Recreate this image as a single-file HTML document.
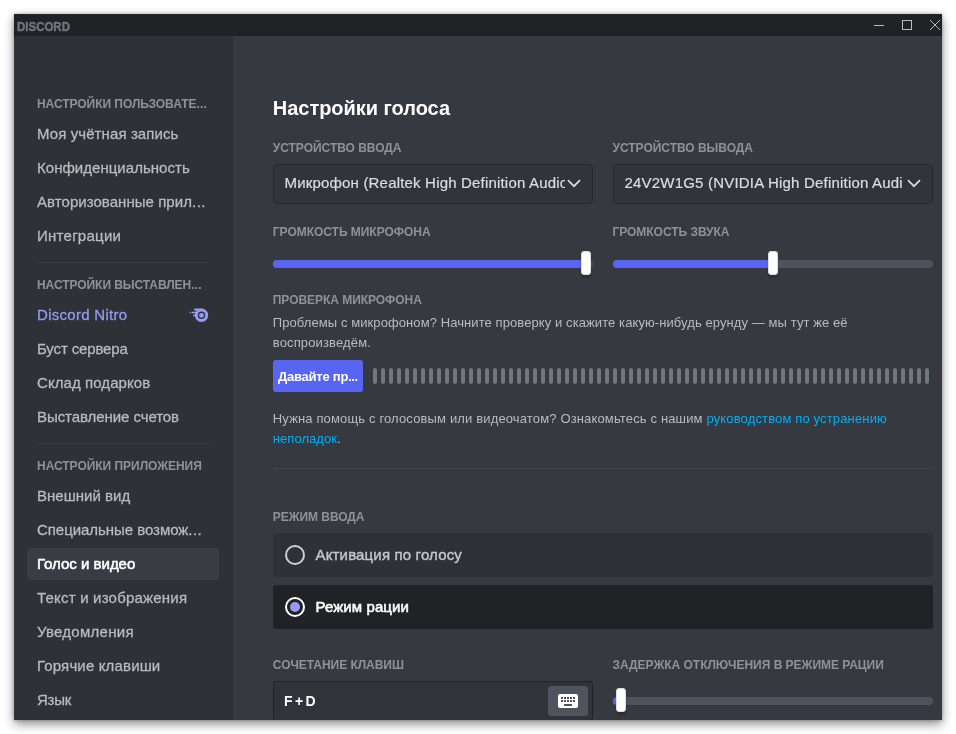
<!DOCTYPE html>
<html lang="ru">
<head>
<meta charset="utf-8">
<title>Discord — Настройки голоса</title>
<style>
*{box-sizing:border-box;margin:0;padding:0}
html,body{width:956px;height:734px;overflow:hidden;background:#fff}
body{font-family:"Liberation Sans",sans-serif;position:relative}
.a{position:absolute}
#win{left:14px;top:14px;width:928px;height:706px;background:#36393f;box-shadow:0 4px 10px rgba(0,0,0,.45),0 0 3px rgba(0,0,0,.25)}
#bar{left:14px;top:14px;width:928px;height:22px;background:#202225}
#side{left:14px;top:36px;width:219px;height:684px;background:#2f3136}
#s1,#s2{-webkit-text-stroke:.2px #dcddde}
.t{position:absolute;white-space:nowrap;line-height:20px;height:20px}
.t i.e{font-style:normal}
.sep{left:37px;width:172px;height:1px;background:#3a3c42}
#sel{left:27px;top:548px;width:192px;height:32px;border-radius:4px;background:#393c43}
.select{height:40px;width:320px;top:164px;background:#31343a;border:1px solid #27292e;border-radius:4px}
.track{height:8px;border-radius:4px;background:#4f545c}
.fill{height:8px;border-radius:4px;background:#5865f2}
.thumb{width:10px;height:24px;border-radius:3px;background:#fff;border:1px solid #dcddde;box-shadow:0 3px 1px 0 rgba(0,0,0,.05),0 2px 2px 0 rgba(0,0,0,.1),0 3px 3px 0 rgba(0,0,0,.05)}
#btn{left:273px;top:360px;width:90px;height:32px;border-radius:3px;background:#5865f2}
.bar{position:absolute;top:368px;width:4px;height:16px;border-radius:2px;background:#72767d}
#div{left:273px;top:468px;width:660px;height:1px;background:#42454a}
.radio{left:273px;width:660px;height:44px;border-radius:3px}
#kb{left:273px;top:681px;width:320px;height:40px;background:#303338;border:1px solid #202225;border-radius:3px}
#kbbtn{left:548px;top:686px;width:40px;height:30px;border-radius:3px;background:#4f545c}
#clipbottom{left:0;top:720px;width:956px;height:14px}
</style>
</head>
<body>
<div class="a" id="win"></div>
<div class="a" id="bar"></div>
<div class="a" id="side"></div>

<!-- title bar -->
<svg class="a" style="left:868px;top:14px" width="74" height="22" viewBox="0 0 74 22">
  <path d="M6 11.5H16" stroke="#b9bbbe" stroke-width="1" fill="none"/>
  <rect x="34.5" y="6.5" width="9" height="9" stroke="#b9bbbe" stroke-width="1" fill="none"/>
  <path d="M62 6L72 16M72 6L62 16" stroke="#b9bbbe" stroke-width="1" fill="none"/>
</svg>

<!-- sidebar -->
<div class="a sep" style="top:262px"></div>
<div class="a sep" style="top:443px"></div>
<div class="a" id="sel"></div>
<svg class="a" style="left:188px;top:306px" width="22" height="18" viewBox="0 0 22 18">
  <g fill="#949cf7">
    <path d="M13.5 2.6a6.7 6.7 0 1 1 0 13.4a6.7 6.7 0 0 1 0-13.4zm0 2.95a3.75 3.75 0 1 0 0 7.5a3.75 3.75 0 0 0 0-7.5z" fill-rule="evenodd"/>
    <circle cx="13.5" cy="9.3" r="2.4"/>
    <rect x="6" y="2.6" width="8" height="2" rx=".6"/>
    <rect x="1.6" y="5.8" width="1.2" height="1.5" rx=".5"/><rect x="3.6" y="5.8" width="5.4" height="1.5" rx=".5"/>
    <rect x="5" y="8.8" width="3.5" height="1.5" rx=".5"/>
  </g>
</svg>

<!-- main: selects -->
<div class="a select" style="left:273px"></div>
<div class="a select" style="left:613px"></div>
<svg class="a" style="left:567px;top:178px" width="15" height="12" viewBox="0 0 15 12"><path d="M1.6 2.8L7 8.2L12.4 2.8" stroke="#dcddde" stroke-width="1.7" fill="none" stroke-linecap="square"/></svg>
<svg class="a" style="left:907px;top:178px" width="15" height="12" viewBox="0 0 15 12"><path d="M1.6 2.8L7 8.2L12.4 2.8" stroke="#dcddde" stroke-width="1.7" fill="none" stroke-linecap="square"/></svg>

<!-- sliders -->
<div class="a track" style="left:273px;top:260px;width:320px"></div>
<div class="a fill" style="left:273px;top:260px;width:313px"></div>
<div class="a thumb" style="left:581px;top:251px"></div>
<div class="a track" style="left:613px;top:260px;width:320px"></div>
<div class="a fill" style="left:613px;top:260px;width:160px"></div>
<div class="a thumb" style="left:768px;top:251px"></div>

<!-- mic test -->
<div class="a" id="btn"></div>
<i class="bar" style="left:373px"></i><i class="bar" style="left:381px"></i><i class="bar" style="left:389px"></i><i class="bar" style="left:397px"></i><i class="bar" style="left:405px"></i><i class="bar" style="left:413px"></i><i class="bar" style="left:421px"></i><i class="bar" style="left:429px"></i><i class="bar" style="left:437px"></i><i class="bar" style="left:445px"></i><i class="bar" style="left:453px"></i><i class="bar" style="left:461px"></i><i class="bar" style="left:469px"></i><i class="bar" style="left:477px"></i><i class="bar" style="left:485px"></i><i class="bar" style="left:493px"></i><i class="bar" style="left:501px"></i><i class="bar" style="left:509px"></i><i class="bar" style="left:517px"></i><i class="bar" style="left:525px"></i><i class="bar" style="left:533px"></i><i class="bar" style="left:541px"></i><i class="bar" style="left:549px"></i><i class="bar" style="left:557px"></i><i class="bar" style="left:565px"></i><i class="bar" style="left:573px"></i><i class="bar" style="left:581px"></i><i class="bar" style="left:589px"></i><i class="bar" style="left:597px"></i><i class="bar" style="left:605px"></i><i class="bar" style="left:613px"></i><i class="bar" style="left:621px"></i><i class="bar" style="left:629px"></i><i class="bar" style="left:637px"></i><i class="bar" style="left:645px"></i><i class="bar" style="left:653px"></i><i class="bar" style="left:661px"></i><i class="bar" style="left:669px"></i><i class="bar" style="left:677px"></i><i class="bar" style="left:685px"></i><i class="bar" style="left:693px"></i><i class="bar" style="left:701px"></i><i class="bar" style="left:709px"></i><i class="bar" style="left:717px"></i><i class="bar" style="left:725px"></i><i class="bar" style="left:733px"></i><i class="bar" style="left:741px"></i><i class="bar" style="left:749px"></i><i class="bar" style="left:757px"></i><i class="bar" style="left:765px"></i><i class="bar" style="left:773px"></i><i class="bar" style="left:781px"></i><i class="bar" style="left:789px"></i><i class="bar" style="left:797px"></i><i class="bar" style="left:805px"></i><i class="bar" style="left:813px"></i><i class="bar" style="left:821px"></i><i class="bar" style="left:829px"></i><i class="bar" style="left:837px"></i><i class="bar" style="left:845px"></i><i class="bar" style="left:853px"></i><i class="bar" style="left:861px"></i><i class="bar" style="left:869px"></i><i class="bar" style="left:877px"></i><i class="bar" style="left:885px"></i><i class="bar" style="left:893px"></i><i class="bar" style="left:901px"></i><i class="bar" style="left:909px"></i><i class="bar" style="left:917px"></i><i class="bar" style="left:925px"></i>
<div class="a" id="div"></div>

<!-- input mode -->
<div class="a radio" style="top:533px;background:#2f3136"></div>
<div class="a radio" style="top:585px;background:#202225"></div>
<svg class="a" style="left:283px;top:543px" width="24" height="24" viewBox="0 0 24 24"><circle cx="12" cy="12" r="9" stroke="#cdcfd1" stroke-width="2" fill="none"/></svg>
<svg class="a" style="left:283px;top:595px" width="24" height="24" viewBox="0 0 24 24"><circle cx="12" cy="12" r="9" stroke="#fff" stroke-width="2" fill="none"/><circle cx="12" cy="12" r="5" fill="#949cf7"/></svg>

<!-- keybind -->
<div class="a" id="kb"></div>
<div class="a" id="kbbtn"></div>
<svg class="a" style="left:558px;top:694px" width="20" height="14" viewBox="0 0 20 14">
  <path fill="#fff" fill-rule="evenodd" d="M2 0h16a2 2 0 0 1 2 2v10a2 2 0 0 1-2 2H2a2 2 0 0 1-2-2V2a2 2 0 0 1 2-2zM3 3v2h2V3zM6 3v2h2V3zM9 3v2h2V3zM12 3v2h2V3zM15 3v2h2V3zM3 6v2h2V6zM6 6v2h2V6zM9 6v2h2V6zM12 6v2h2V6zM15 6v2h2V6zM6 10v2h8v-2z"/>
</svg>
<div class="a track" style="left:613px;top:697px;width:320px"></div>
<div class="a fill" style="left:613px;top:697px;width:10px"></div>
<div class="a thumb" style="left:616px;top:688px"></div>

<div class="a" id="txt" style="left:0;top:0;width:956px;height:734px;will-change:transform">
<span class="t" id="t0" style="left:37.00px;top:94.14px;font-size:12px;font-weight:700;color:#8e9297;letter-spacing:-0.050px;">НАСТРОЙКИ ПОЛЬЗОВАТЕ<i class="e" style="letter-spacing:.2px">...</i></span>
<span class="t" id="t1" style="left:37.00px;top:123.80px;font-size:15px;font-weight:400;color:#b9bbbe;letter-spacing:0.095px;-webkit-text-stroke:.28px #b9bbbe;">Моя учётная запись</span>
<span class="t" id="t2" style="left:37.00px;top:157.80px;font-size:15px;font-weight:400;color:#b9bbbe;letter-spacing:0.035px;-webkit-text-stroke:.28px #b9bbbe;">Конфиденциальность</span>
<span class="t" id="t3" style="left:37.00px;top:191.80px;font-size:15px;font-weight:400;color:#b9bbbe;letter-spacing:0.048px;-webkit-text-stroke:.28px #b9bbbe;">Авторизованные прил<i class="e" style="letter-spacing:.5px">...</i></span>
<span class="t" id="t4" style="left:37.00px;top:225.80px;font-size:15px;font-weight:400;color:#b9bbbe;letter-spacing:0.258px;-webkit-text-stroke:.28px #b9bbbe;">Интеграции</span>
<span class="t" id="t5" style="left:37.00px;top:275.24px;font-size:12px;font-weight:700;color:#8e9297;letter-spacing:-0.059px;">НАСТРОЙКИ ВЫСТАВЛЕН<i class="e" style="letter-spacing:.2px">...</i></span>
<span class="t" id="t6" style="left:37.00px;top:304.80px;font-size:15px;font-weight:400;color:#949cf7;letter-spacing:0.293px;-webkit-text-stroke:.28px #949cf7;">Discord Nitro</span>
<span class="t" id="t7" style="left:37.00px;top:338.80px;font-size:15px;font-weight:400;color:#b9bbbe;letter-spacing:-0.142px;-webkit-text-stroke:.28px #b9bbbe;">Буст сервера</span>
<span class="t" id="t8" style="left:37.00px;top:372.80px;font-size:15px;font-weight:400;color:#b9bbbe;letter-spacing:0.078px;-webkit-text-stroke:.28px #b9bbbe;">Склад подарков</span>
<span class="t" id="t9" style="left:37.00px;top:406.80px;font-size:15px;font-weight:400;color:#b9bbbe;letter-spacing:-0.068px;-webkit-text-stroke:.28px #b9bbbe;">Выставление счетов</span>
<span class="t" id="t10" style="left:37.00px;top:456.14px;font-size:12px;font-weight:700;color:#8e9297;letter-spacing:-0.032px;">НАСТРОЙКИ ПРИЛОЖЕНИЯ</span>
<span class="t" id="t11" style="left:37.00px;top:485.80px;font-size:15px;font-weight:400;color:#b9bbbe;letter-spacing:0.020px;-webkit-text-stroke:.28px #b9bbbe;">Внешний вид</span>
<span class="t" id="t12" style="left:37.00px;top:519.80px;font-size:15px;font-weight:400;color:#b9bbbe;letter-spacing:-0.047px;-webkit-text-stroke:.28px #b9bbbe;">Специальные возмож<i class="e" style="letter-spacing:.5px">...</i></span>
<span class="t" id="t13" style="left:37.00px;top:553.80px;font-size:15px;font-weight:400;color:#ffffff;letter-spacing:-0.008px;-webkit-text-stroke:.55px #fff;">Голос и видео</span>
<span class="t" id="t14" style="left:37.00px;top:587.80px;font-size:15px;font-weight:400;color:#b9bbbe;letter-spacing:0.203px;-webkit-text-stroke:.28px #b9bbbe;">Текст и изображения</span>
<span class="t" id="t15" style="left:37.00px;top:621.80px;font-size:15px;font-weight:400;color:#b9bbbe;letter-spacing:0.273px;-webkit-text-stroke:.28px #b9bbbe;">Уведомления</span>
<span class="t" id="t16" style="left:37.00px;top:655.80px;font-size:15px;font-weight:400;color:#b9bbbe;letter-spacing:0.157px;-webkit-text-stroke:.28px #b9bbbe;">Горячие клавиши</span>
<span class="t" id="t17" style="left:37.00px;top:689.80px;font-size:15px;font-weight:400;color:#b9bbbe;letter-spacing:-0.216px;-webkit-text-stroke:.28px #b9bbbe;">Язык</span>
<span class="t" id="t18" style="left:272.80px;top:97.67px;font-size:20px;font-weight:700;color:#ffffff;letter-spacing:-0.034px;">Настройки голоса</span>
<span class="t" id="t19" style="left:272.80px;top:138.14px;font-size:12px;font-weight:700;color:#8e9297;letter-spacing:-0.028px;">УСТРОЙСТВО ВВОДА</span>
<span class="t" id="t20" style="left:612.50px;top:138.14px;font-size:12px;font-weight:700;color:#8e9297;letter-spacing:-0.022px;">УСТРОЙСТВО ВЫВОДА</span>
<span class="t" id="t21" style="left:272.80px;top:221.84px;font-size:12px;font-weight:700;color:#8e9297;letter-spacing:-0.028px;">ГРОМКОСТЬ МИКРОФОНА</span>
<span class="t" id="t22" style="left:612.50px;top:221.84px;font-size:12px;font-weight:700;color:#8e9297;letter-spacing:-0.038px;">ГРОМКОСТЬ ЗВУКА</span>
<span class="t" id="t23" style="left:272.80px;top:289.84px;font-size:12px;font-weight:700;color:#8e9297;letter-spacing:-0.047px;">ПРОВЕРКА МИКРОФОНА</span>
<span class="t" id="t24" style="left:272.80px;top:313.10px;font-size:13px;font-weight:400;color:#b9bbbe;letter-spacing:0.086px;">Проблемы с микрофоном? Начните проверку и скажите какую-нибудь ерунду — мы тут же её</span>
<span class="t" id="t25" style="left:272.80px;top:333.20px;font-size:13px;font-weight:400;color:#b9bbbe;letter-spacing:0.137px;">воспроизведём.</span>
<span class="t" id="t26" style="left:278.00px;top:367.00px;font-size:13px;font-weight:700;color:#ffffff;letter-spacing:-0.238px;">Давайте пр<i class="e" style="letter-spacing:-.4px">...</i></span>
<span class="t" id="t27" style="left:272.80px;top:409.30px;font-size:13px;font-weight:400;color:#b9bbbe;letter-spacing:0.147px;">Нужна помощь с голосовым или видеочатом? Ознакомьтесь с нашим <span style="color:#00aff4">руководством по устранению</span></span>
<span class="t" id="t28" style="left:272.80px;top:429.40px;font-size:13px;font-weight:400;color:#b9bbbe;letter-spacing:0.057px;"><span style="color:#00aff4">неполадок</span>.</span>
<span class="t" id="t29" style="left:272.80px;top:506.84px;font-size:12px;font-weight:700;color:#8e9297;letter-spacing:-0.049px;">РЕЖИМ ВВОДА</span>
<span class="t" id="t30" style="left:315.50px;top:544.80px;font-size:15px;font-weight:400;color:#c4c6c9;letter-spacing:0.161px;-webkit-text-stroke:.4px #c4c6c9;">Активация по голосу</span>
<span class="t" id="t31" style="left:315.50px;top:596.80px;font-size:15px;font-weight:400;color:#ffffff;letter-spacing:0.095px;-webkit-text-stroke:.55px #fff;">Режим рации</span>
<span class="t" id="t32" style="left:272.80px;top:655.24px;font-size:12px;font-weight:700;color:#8e9297;letter-spacing:-0.036px;">СОЧЕТАНИЕ КЛАВИШ</span>
<span class="t" id="t33" style="left:612.50px;top:655.24px;font-size:12px;font-weight:700;color:#8e9297;letter-spacing:-0.019px;">ЗАДЕРЖКА ОТКЛЮЧЕНИЯ В РЕЖИМЕ РАЦИИ</span>
<span class="t" id="t34" style="left:284.00px;top:690.95px;font-size:14px;font-weight:700;color:#ffffff;letter-spacing:-0.765px;">F + D</span>
<span class="a" id="logo" style="left:17px;top:16.7px;font-weight:700;font-size:13.4px;line-height:20px;color:#72767d;-webkit-text-stroke:.45px #72767d;transform:scaleX(.857);transform-origin:0 0;white-space:nowrap">DISCORD</span>
<div class="a" style="left:284.5px;top:166px;width:280px;height:36px;overflow:hidden"><span class="t" id="s1" style="left:0;top:7px;font-size:15px;color:#dcddde;letter-spacing:.185px">Микрофон (Realtek High Definition Audio)</span></div>
<div class="a" style="left:624.5px;top:166px;width:278.6px;height:36px;overflow:hidden"><span class="t" id="s2" style="left:0;top:7px;font-size:15px;color:#dcddde;letter-spacing:.2px">24V2W1G5 (NVIDIA High Definition Audio)</span></div>
</div>

<!-- bottom clip: everything below the window edge is page background + shadow -->
<div class="a" id="clipbottom" style="background:#fff"></div>
<div class="a" style="left:0;top:720px;width:956px;height:14px;overflow:hidden"><div class="a" style="left:14px;top:-706px;width:928px;height:706px;box-shadow:0 4px 10px rgba(0,0,0,.45),0 0 3px rgba(0,0,0,.25)"></div></div>
</body>
</html>
